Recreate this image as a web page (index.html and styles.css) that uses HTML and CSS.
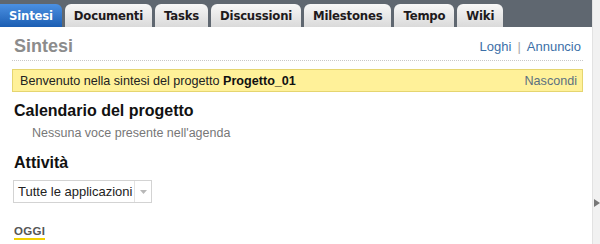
FILE: index.html
```html
<!DOCTYPE html>
<html>
<head>
<meta charset="utf-8">
<link rel="stylesheet" href="styles.css">
</head>
<body>
<div class="frame">
  <div class="main">
    <nav class="tabs">
      <span class="tab active">Sintesi</span>
      <span class="tab">Documenti</span>
      <span class="tab">Tasks</span>
      <span class="tab">Discussioni</span>
      <span class="tab">Milestones</span>
      <span class="tab">Tempo</span>
      <span class="tab">Wiki</span>
    </nav>
    <div class="content">
      <div class="head">
        <h1 class="title">Sintesi</h1>
        <div class="links"><a>Loghi</a><span class="sep">|</span><a>Annuncio</a></div>
      </div>
      <div class="banner">
        <span>Benvenuto nella sintesi del progetto <b>Progetto_01</b></span>
        <a class="hide">Nascondi</a>
      </div>
      <h2 class="sec">Calendario del progetto</h2>
      <p class="empty">Nessuna voce presente nell'agenda</p>
      <h2 class="sec act">Attività</h2>
      <div class="select"><span class="sel-text">Tutte le applicazioni</span><span class="sel-arrow"><svg width="7" height="4" viewBox="0 0 7 4"><path d="M0 0H7L3.5 4Z" fill="#b8b8b8"/></svg></span></div>
      <div class="today">OGGI</div>
    </div>
  </div>
  <div class="side"><svg class="side-arrow" width="6" height="8" viewBox="0 0 6 8"><path d="M0 0L6 4L0 8Z" fill="#777"/></svg></div>
</div>
</body>
</html>
```

FILE: styles.css
```css
html, body { margin: 0; padding: 0; }
body { width: 600px; height: 244px; overflow: hidden; background: #fff; font-family: "Liberation Sans", Arial, sans-serif; }
.frame { display: flex; height: 244px; }
.main { width: 592px; display: flex; flex-direction: column; }
.side { width: 7px; border-left: 1px solid #e2e2e2; background: #f1f1f1; position: relative; }
.side-arrow { position: absolute; left: 1px; top: 199px; }
.tabs { height: 27px; background: #5f6770; display: flex; align-items: flex-end; gap: 3px; box-sizing: border-box; }
.tab { height: 23px; box-sizing: border-box; padding: 0 9px; display: flex; align-items: center; font-family: "DejaVu Sans", Verdana, sans-serif; font-weight: bold; font-size: 11.7px; color: #1e1a1c; background: linear-gradient(#f7f7f7, #dadada); border-radius: 6px 6px 0 0; letter-spacing: -0.2px; }
.tab.active { background: linear-gradient(#4b90e2, #1c5eb3); color: #fff; border-radius: 0 6px 0 0; padding: 0 9px 0 9px; }
.content { padding: 0 9px 0 12px; }
.head { display: flex; justify-content: space-between; align-items: center; height: 33px; border-bottom: 1px dotted #c8c8c8; padding: 0 0 0 2px; }
.title { margin: 0; font-size: 18px; font-weight: bold; color: #8c8c8c; font-family: "Liberation Sans", Arial, sans-serif; padding-top: 6px; }
.links { font-size: 13px; color: #3c6fa8; padding-top: 5px; padding-right: 2px; }
.links .sep { color: #aaa; margin: 0 6px; }
.banner { margin-top: 8px; height: 23px; box-sizing: border-box; background: #fff199; border: 1px solid #e5d570; display: flex; justify-content: space-between; align-items: center; padding: 0 5px 0 7px; font-size: 12.6px; color: #222; }
.banner b { color: #111; }
.hide { color: #5c7080; }
.sec { margin: 0; font-size: 16px; font-weight: bold; color: #111; padding-left: 2px; }
.sec:first-of-type { margin-top: 10px; }
.empty { margin: 6px 0 0 20px; font-size: 12.5px; color: #777; }
.act { margin-top: 14px; }
.select { margin-top: 8px; margin-left: 1px; width: 139px; height: 23px; box-sizing: border-box; border: 1px solid #d3d3d3; display: flex; align-items: center; font-size: 13px; color: #222; }
.sel-text { flex: 1; padding-left: 4px; white-space: nowrap; }
.sel-arrow { width: 16px; height: 21px; border-left: 1px solid #e2e2e2; display: flex; align-items: center; justify-content: center; }
.today { margin-top: 22px; margin-left: 2px; display: inline-block; font-size: 11.5px; font-weight: bold; color: #555; border-bottom: 2px solid #f0d000; padding-bottom: 1px; letter-spacing: 0.3px; }
```
